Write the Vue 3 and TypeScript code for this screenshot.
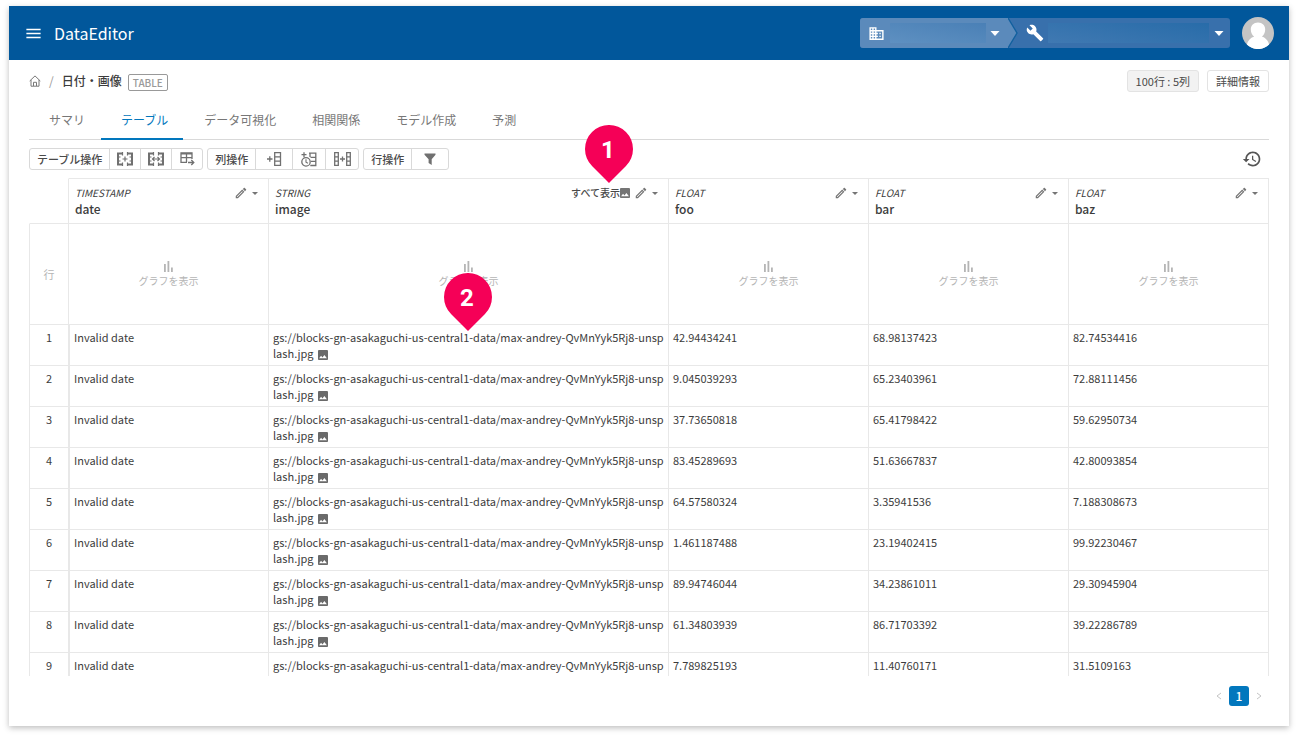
<script setup lang="ts">
interface Column {
  type: string
  name: string
  kind: 'date' | 'image' | 'number'
}

interface Row {
  id: number
  values: [string, string, string]
}

const tabs: string[] = ['サマリ', 'テーブル', 'データ可視化', '相関関係', 'モデル作成', '予測']
const activeTab = 'テーブル'

const columns: Column[] = [
  { type: 'TIMESTAMP', name: 'date', kind: 'date' },
  { type: 'STRING', name: 'image', kind: 'image' },
  { type: 'FLOAT', name: 'foo', kind: 'number' },
  { type: 'FLOAT', name: 'bar', kind: 'number' },
  { type: 'FLOAT', name: 'baz', kind: 'number' },
]

const imagePath = 'gs://blocks-gn-asakaguchi-us-central1-data/max-andrey-QvMnYyk5Rj8-unsplash.jpg'

const rows: Row[] = [
  { id: 1, values: ['42.94434241', '68.98137423', '82.74534416'] },
  { id: 2, values: ['9.045039293', '65.23403961', '72.88111456'] },
  { id: 3, values: ['37.73650818', '65.41798422', '59.62950734'] },
  { id: 4, values: ['83.45289693', '51.63667837', '42.80093854'] },
  { id: 5, values: ['64.57580324', '3.35941536', '7.188308673'] },
  { id: 6, values: ['1.461187488', '23.19402415', '99.92230467'] },
  { id: 7, values: ['89.94746044', '34.23861011', '29.30945904'] },
  { id: 8, values: ['61.34803939', '86.71703392', '39.22286789'] },
  { id: 9, values: ['7.789825193', '11.40760171', '31.5109163'] },
]
</script>

<template>
  <div class="page-frame">
    <div class="window">
      <header class="app-bar">
        <button class="icon-button" type="button" aria-label="メニュー">
          <svg width="19" height="19" viewBox="0 0 24 24" fill="currentColor"><path d="M3 18h18v-2H3v2zm0-5h18v-2H3v2zm0-7v2h18V6H3z" /></svg>
        </button>
        <h1 class="app-title">DataEditor</h1>
        <div class="context">
          <button class="context-org" type="button" aria-label="組織">
            <svg width="17" height="17" viewBox="0 0 24 24" fill="currentColor"><path d="M12 7V3H2v18h20V7H12zM6 19H4v-2h2v2zm0-4H4v-2h2v2zm0-4H4V9h2v2zm0-4H4V5h2v2zm4 12H8v-2h2v2zm0-4H8v-2h2v2zm0-4H8V9h2v2zm0-4H8V5h2v2zm10 12h-8v-2h2v-2h-2v-2h2v-2h-2V9h8v10zm-2-8h-2v2h2v-2zm0 4h-2v2h2v-2z" /></svg>
            <span class="mask mask-org"></span>
            <svg width="10" height="5" viewBox="0 0 10 5" fill="currentColor"><path d="M.5 0h9L5 5z" /></svg>
          </button>
          <svg class="chevron" width="10" height="30" viewBox="0 0 10 30"><path d="M0 0L9 15 0 30z" fill="#5b8abb" /><path d="M0 0L9 15 0 30" fill="none" stroke="#12609f" stroke-width="1.4" /></svg>
          <button class="context-project" type="button" aria-label="プロジェクト">
            <svg width="18" height="18" viewBox="0 0 24 24" fill="currentColor"><path d="M22.7 19l-9.1-9.1c.9-2.3.4-5-1.5-6.9-2-2-5-2.4-7.4-1.3L9 6 6 9 1.6 4.7C.4 7.1.9 10.1 2.9 12.1c1.9 1.9 4.6 2.4 6.9 1.5l9.1 9.1c.4.4 1 .4 1.4 0l2.3-2.3c.5-.4.5-1.1.1-1.4z" /></svg>
            <span class="mask mask-project"></span>
            <svg width="10" height="5" viewBox="0 0 10 5" fill="currentColor"><path d="M.5 0h9L5 5z" /></svg>
          </button>
        </div>
        <button class="avatar" type="button" aria-label="アカウント">
          <svg width="32" height="32" viewBox="0 0 32 32"><circle cx="16" cy="16" r="16" fill="#c4c4c4" /><path d="M16 5.500c4.400 0 7.200 3 7.200 7 0 3.200-1.500 5.800-3.400 7.100 4 1.200 6.600 4.500 7.300 8A16 16 0 0 1 4.900 27.600c.7-3.500 3.300-6.800 7.300-8-1.900-1.300-3.400-3.900-3.400-7.100 0-4 2.800-7 7.200-7z" fill="#fff" /></svg>
        </button>
      </header>

      <main class="content">
        <div class="heading">
          <nav class="breadcrumb" aria-label="パンくず">
            <a class="home" href="#" aria-label="ホーム">
              <svg width="12" height="12" viewBox="0 0 12 12" fill="none" stroke="currentColor" stroke-width="1"><path d="M.7 6L6 .9 11.300 6M2 5v6.200h8V5M4.500 11V7.300h3V11" /></svg>
            </a>
            <span class="slash">/</span>
            <h2 class="table-name">日付・画像</h2>
            <span class="badge">TABLE</span>
          </nav>
          <button class="small-button filled" type="button">100行 : 5列</button>
          <button class="small-button" type="button">詳細情報</button>
        </div>

        <nav class="tabs">
          <a v-for="tab in tabs" :key="tab" href="#" class="tab" :class="{ active: tab === activeTab }">{{ tab }}</a>
        </nav>

        <div class="toolbar">
          <div class="group">
            <span class="group-label">テーブル操作</span>
            <button class="tool" type="button" aria-label="テーブルを追加">
              <svg width="16" height="14" viewBox="0 0 16 14" fill="none" stroke="currentColor"><path d="M1 .5v13M0 1.500h6M0 12.500h6M15 .5v13M16 1.500h-6M16 12.500h-6" stroke-width="2" /><path d="M5.500 0v3.500M5.500 10.500V14M10.500 0v3.500M10.500 10.500V14M2 5h1.500M2 9h1.500M14 5h-1.500M14 9h-1.500M5.500 7h5M8 4.500v5" stroke-width="1.200" /></svg>
            </button>
            <button class="tool" type="button" aria-label="テーブルを結合">
              <svg width="16" height="14" viewBox="0 0 16 14" fill="none" stroke="currentColor"><path d="M1 .5v13M0 1.500h6M0 12.500h6M15 .5v13M16 1.500h-6M16 12.500h-6" stroke-width="2" /><path d="M5.500 0v3.500M5.500 10.500V14M10.500 0v3.500M10.500 10.500V14M2 5h1.500M2 9h1.500M14 5h-1.500M14 9h-1.500M4.500 7h7M6.500 5L4.500 7l2 2M9.500 5l2 2-2 2" stroke-width="1.200" /></svg>
            </button>
            <button class="tool" type="button" aria-label="テーブルを出力">
              <svg width="15" height="14" viewBox="0 0 15 14" fill="none" stroke="currentColor"><path d="M7 10.400H1V1h11v6M1 5.700h11M6.500 2v8" stroke-width="1.300" /><path d="M1 1.700h11" stroke-width="1.600" /><path d="M8 10.500h5.500M11.300 8l2.500 2.500-2.500 2.500" stroke-width="1.300" /></svg>
            </button>
          </div>
          <div class="group">
            <span class="group-label">列操作</span>
            <button class="tool wide" type="button" aria-label="列を追加">
              <svg width="15" height="14" viewBox="0 0 15 14" fill="none" stroke="currentColor" stroke-width="1.300"><path d="M0 7h5.500M2.800 4.200v5.600M7.700.7h5.800v12.600H7.700zM7.700 4.900h5.800M7.700 9.100h5.800" /></svg>
            </button>
            <button class="tool medium" type="button" aria-label="時刻列を追加">
              <svg width="16" height="15" viewBox="0 0 16 15" fill="none" stroke="currentColor" stroke-width="1.300"><path d="M.5 2.700h5M3 .2v5M8 1.200h6.800v12.300H9.300M9 1v4M9.500 5.300h5M10 9.400h5" /><circle cx="5" cy="9.900" r="4.200" /><path d="M5 7.200v3l2 1" stroke-width="1.100" /></svg>
            </button>
            <button class="tool medium" type="button" aria-label="列を結合">
              <svg width="17" height="14" viewBox="0 0 17 14" fill="none" stroke="currentColor" stroke-width="1.300"><path d="M.7.7h3.600v12.600H.7zM.7 4.900h3.600M.7 9.100h3.600M12.700.7h3.600v12.600h-3.600zM12.700 4.900h3.600M12.700 9.100h3.600M6 7h5M8.500 4.500v5" /></svg>
            </button>
          </div>
          <div class="group">
            <span class="group-label">行操作</span>
            <button class="tool wide" type="button" aria-label="絞り込み">
              <svg width="12" height="12" viewBox="0 0 12 12" fill="currentColor"><path d="M.5.500h11v1.300L7.700 6.200V12L4.600 10V6.200L.5 1.800z" /></svg>
            </button>
          </div>
          <button class="history" type="button" aria-label="履歴">
            <svg width="20" height="20" viewBox="0 0 24 24" fill="currentColor"><path d="M13 3c-4.970 0-9 4.030-9 9H1l3.890 3.890.07.14L9 12H6c0-3.870 3.130-7 7-7s7 3.130 7 7-3.130 7-7 7c-1.930 0-3.680-.79-4.940-2.060l-1.420 1.420C8.270 19.990 10.510 21 13 21c4.970 0 9-4.030 9-9s-4.030-9-9-9zm-1 5v5l4.280 2.540.72-1.210-3.500-2.080V8H12z" /></svg>
          </button>
        </div>

        <div class="grid-area">
          <div class="grid-clip">
            <table class="grid">
              <colgroup>
                <col class="col-index" />
                <col v-for="column in columns" :key="column.name" :class="'col-' + column.kind" />
              </colgroup>
              <thead>
                <tr class="head-row">
                  <td class="corner"></td>
                  <th v-for="column in columns" :key="column.name" scope="col">
                    <div class="head-top">
                      <span class="type">{{ column.type }}</span>
                      <button v-if="column.kind === 'image'" class="show-all" type="button">
                        すべて表示<svg width="10" height="10" viewBox="3 3 18 18" fill="currentColor"><path d="M21 19V5c0-1.100-.9-2-2-2H5c-1.100 0-2 .9-2 2v14c0 1.100.9 2 2 2h14c1.100 0 2-.9 2-2zM8.500 13.500l2.500 3.010L14.500 12l4.500 6H5l3.500-4.500z" /></svg>
                      </button>
                      <button class="edit" type="button" aria-label="列名を編集">
                        <svg width="14" height="14" viewBox="0 0 24 24" fill="currentColor"><path d="M14.060 9.020l.92.92L5.920 19H5v-.92l9.060-9.060M17.660 3c-.25 0-.51.1-.7.29l-1.830 1.830 3.750 3.750 1.830-1.830c.39-.39.39-1.020 0-1.410l-2.340-2.340c-.2-.2-.45-.29-.71-.29zm-3.600 3.190L3 17.250V21h3.750L17.810 9.940l-3.750-3.750z" /></svg>
                      </button>
                      <button class="more" type="button" aria-label="列メニュー">
                        <svg width="6" height="3" viewBox="0 0 6 3" fill="currentColor"><path d="M0 0h6L3 3z" /></svg>
                      </button>
                    </div>
                    <div class="name">{{ column.name }}</div>
                  </th>
                </tr>
                <tr class="chart-row">
                  <th class="row-label" scope="row">行</th>
                  <td v-for="column in columns" :key="column.name">
                    <button class="show-chart" type="button">
                      <svg width="10" height="11" viewBox="0 0 10 11" fill="currentColor"><path d="M0 3h1.800v8H0zM3.500 0h1.800v11H3.500zM7 6.500h1.800V11H7z" /></svg>
                      <span>グラフを表示</span>
                    </button>
                  </td>
                </tr>
              </thead>
              <tbody>
                <tr v-for="row in rows" :key="row.id">
                  <th class="index" scope="row">{{ row.id }}</th>
                  <td class="date">Invalid date</td>
                  <td class="path">{{ imagePath }} <svg width="10" height="10" viewBox="3 3 18 18" fill="currentColor"><path d="M21 19V5c0-1.100-.9-2-2-2H5c-1.100 0-2 .9-2 2v14c0 1.100.9 2 2 2h14c1.100 0 2-.9 2-2zM8.500 13.500l2.500 3.010L14.500 12l4.500 6H5l3.500-4.500z" /></svg></td>
                  <td v-for="(value, i) in row.values" :key="i">{{ value }}</td>
                </tr>
              </tbody>
            </table>
          </div>
          <div class="pin pin-first">
            <svg width="48" height="58" viewBox="0 0 48 58"><path d="M24 58L7.030 40.970A24 24 0 1 1 40.970 40.970z" fill="#f50057" /></svg>
            <span>1</span>
          </div>
          <div class="pin pin-second">
            <svg width="48" height="58" viewBox="0 0 48 58"><path d="M24 58L7.030 40.970A24 24 0 1 1 40.970 40.970z" fill="#f50057" /></svg>
            <span>2</span>
          </div>
        </div>

        <nav class="pagination" aria-label="ページ">
          <button class="page-step" type="button" aria-label="前のページ">
            <svg width="6" height="8" viewBox="0 0 6 8" fill="none" stroke="currentColor"><path d="M5 1L1 4l4 3" /></svg>
          </button>
          <button class="page current" type="button">1</button>
          <button class="page-step" type="button" aria-label="次のページ">
            <svg width="6" height="8" viewBox="0 0 6 8" fill="none" stroke="currentColor"><path d="M1 1l4 3-4 3" /></svg>
          </button>
        </nav>
      </main>
    </div>
  </div>
</template>

<style>
body {
  margin: 0;
  background: #fff;
}
</style>

<style scoped>
.page-frame,
.page-frame * {
  box-sizing: border-box;
}

.page-frame {
  height: 100vh;
  padding: 6px 9px 12px;
}

.window {
  display: flex;
  flex-direction: column;
  height: 100%;
  background: #fff;
  box-shadow: 0 2px 6px rgba(0, 0, 0, 0.26);
  color: #3c3c3c;
  font-family: "Noto Sans CJK JP", sans-serif;
  font-size: 12px;
  line-height: 16px;
}

.window button {
  margin: 0;
  padding: 0;
  border: 0;
  background: none;
  color: inherit;
  font: inherit;
  cursor: pointer;
}

svg {
  display: block;
  flex: none;
}

a {
  color: inherit;
  text-decoration: none;
}

.app-bar {
  display: flex;
  flex: none;
  align-items: center;
  height: 54px;
  padding: 0 15px;
  background: #01579b;
  color: #fff;
}

.app-title {
  flex: 1;
  margin: 0 0 0 11px;
  font-size: 16px;
  font-weight: 400;
  line-height: 24px;
}

.context {
  display: flex;
  height: 30px;
  margin-right: 12px;
  border-radius: 3px;
  overflow: hidden;
  background: #3870ac;
}

.window .context-org,
.window .context-project {
  display: flex;
  align-items: center;
}

.window .context-org {
  width: 148px;
  padding: 0 8px;
  background: #5b8abb;
}

.window .context-project {
  width: 212px;
  padding: 0 6px 0 8px;
}

.mask {
  flex: 1;
  height: 20px;
}

.mask-org {
  margin: 0 4px 0 5px;
  background: linear-gradient(190deg, #4a80b6, #5e90c1);
}

.mask-project {
  margin: 0 5px 0 4px;
  background: linear-gradient(190deg, #286ca9, #4079b2);
}

.avatar {
  border-radius: 50%;
}

.content {
  display: flex;
  flex: 1;
  flex-direction: column;
  min-height: 0;
  padding: 10px 20px 20px;
}

.heading {
  display: flex;
  align-items: center;
  gap: 8px;
  height: 22px;
}

.breadcrumb {
  display: flex;
  flex: 1;
  align-items: center;
}

.home {
  color: #777;
}

.slash {
  margin: 0 8px;
  color: #999;
}

.table-name {
  margin: 0 6px 0 0;
  font-size: 12px;
  font-weight: 500;
}

.badge {
  margin-top: 2px;
  padding: 0 4px;
  border: 1px solid #999;
  border-radius: 2px;
  color: #999;
  font-size: 10px;
  font-weight: 500;
  line-height: 15px;
}

.window .small-button {
  height: 22px;
  padding: 0 8px;
  border: 1px solid #e3e3e3;
  border-radius: 3px;
  color: #4a4a4a;
  font-size: 11px;
  line-height: 20px;
}

.window .filled {
  background: #f2f2f2;
}

.tabs {
  display: flex;
  gap: 1px;
  height: 48px;
  border-bottom: 1px solid #d9d9d9;
}

.tab {
  height: 48px;
  padding: 20px 15px 0 20px;
  color: #777;
}

.tab.active {
  border-bottom: 2px solid #0277bd;
  color: #0277bd;
}

.toolbar {
  display: flex;
  gap: 4px;
  align-items: center;
  height: 38px;
}

.group {
  display: flex;
  height: 22px;
  border: 1px solid #d9d9d9;
  border-radius: 3px;
}

.group-label {
  padding: 0 7px;
  color: #4a4a4a;
  font-size: 11px;
  font-weight: 500;
  line-height: 20px;
}

.window .tool {
  display: flex;
  align-items: center;
  justify-content: center;
  width: 31px;
  border-left: 1px solid #d9d9d9;
  color: #707070;
}

.window .wide {
  width: 37px;
}

.window .medium {
  width: 33px;
}

.window .history {
  margin: 0 7px 0 auto;
  color: #555;
}

.grid-area {
  position: relative;
  flex: 1;
  min-height: 0;
}

.grid-clip {
  height: 100%;
  overflow: hidden;
}

.grid {
  width: 100%;
  table-layout: fixed;
  border-collapse: separate;
  border-spacing: 0;
}

.col-index {
  width: 40px;
}

.col-image {
  width: 400px;
}

.grid th,
.grid td {
  padding: 4px;
  border-right: 1px solid #e8e8e8;
  border-bottom: 1px solid #e8e8e8;
  font-weight: 400;
  text-align: left;
  vertical-align: top;
}

.grid tbody {
  font-size: 11px;
}

.grid tr > :first-child {
  border-left: 1px solid #e8e8e8;
}

.grid .head-row > * {
  height: 46px;
  padding: 6px 6px 0;
  border-top: 1px solid #e8e8e8;
}

.grid .head-row > .corner {
  border-top-color: transparent;
  border-left-color: transparent;
}

.head-top {
  display: flex;
  align-items: center;
  height: 16px;
}

.type {
  flex: 1;
  font-size: 10px;
  font-style: italic;
}

.window .show-all {
  display: flex;
  align-items: center;
  color: #4a4a4a;
  font-size: 10px;
  font-weight: 500;
}

.show-all svg,
.edit svg,
.more svg {
  color: #757575;
}

.window .edit {
  margin: 0 4px;
}

.window .more {
  margin-right: 4px;
}

.name {
  font-weight: 500;
}

.grid .chart-row > * {
  height: 101px;
  padding: 0;
  color: #b5b5b5;
  text-align: center;
  vertical-align: middle;
}

.grid .row-label {
  font-size: 11px;
}

.window .show-chart {
  display: inline-flex;
  flex-direction: column;
  gap: 1px;
  align-items: center;
  font-size: 10px;
}

.grid .index {
  text-align: center;
}

.grid .date {
  border-left: 1px solid #e8e8e8;
}

.path {
  word-break: break-all;
}

.path svg {
  display: inline;
  margin-left: 2px;
  vertical-align: -2px;
  color: #6a6a6a;
}

.pin {
  position: absolute;
  width: 48px;
  height: 58px;
  color: #fff;
  font-family: Roboto, sans-serif;
  font-size: 24px;
  font-weight: 700;
  line-height: 50px;
  text-align: center;
}

.pin svg,
.pin span {
  position: absolute;
  inset: 0;
}

.pin span {
  padding-right: 2px;
}

.pin-first {
  top: -53px;
  left: 556px;
}

.pin-second {
  top: 95px;
  left: 415px;
}

.pagination {
  display: flex;
  align-items: center;
  justify-content: flex-end;
  margin-top: 10px;
}

.window .page-step {
  display: flex;
  align-items: center;
  justify-content: center;
  width: 20px;
  height: 20px;
  color: #c4c4c4;
}

.window .current {
  width: 20px;
  height: 20px;
  border-radius: 3px;
  background: #0277bd;
  color: #fff;
  font-weight: 500;
}
</style>
